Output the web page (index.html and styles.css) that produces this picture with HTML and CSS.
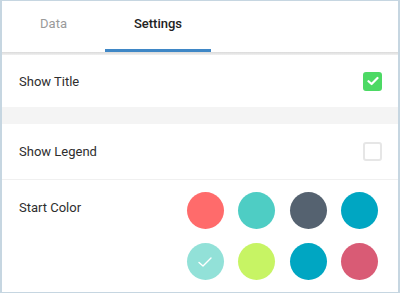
FILE: index.html
```html
<!DOCTYPE html>
<html>
<head>
<meta charset="utf-8">
<link rel="stylesheet" href="styles.css">
</head>
<body>
<div class="panel">
  <div class="tabs">
    <div class="tab">Data</div>
    <div class="tab active">Settings</div>
  </div>
  <div class="tab-shadow"></div>
  <div class="row row-title">
    <span class="label">Show Title</span>
    <span class="check on">
      <svg width="12" height="10" viewBox="0 0 12 10"><path d="M1.5 5.2 L4.6 8 L10.5 2" fill="none" stroke="#fff" stroke-width="2.2" stroke-linecap="round" stroke-linejoin="round"/></svg>
    </span>
  </div>
  <div class="band"></div>
  <div class="row row-legend">
    <span class="label">Show Legend</span>
    <span class="check"></span>
  </div>
  <div class="row-color">
    <span class="label color-label">Start Color</span>
    <div class="swatches">
      <span class="sw c1"></span>
      <span class="sw c2"></span>
      <span class="sw c3"></span>
      <span class="sw c4"></span>
      <span class="sw c5">
        <svg width="16" height="12" viewBox="0 0 16 12"><path d="M2 6.5 L6 10 L14 2" fill="none" stroke="#fff" stroke-width="1.4" stroke-linecap="round" stroke-linejoin="round"/></svg>
      </span>
      <span class="sw c6"></span>
      <span class="sw c7"></span>
      <span class="sw c8"></span>
    </div>
  </div>
</div>
</body>
</html>
```
FILE: styles.css
```css
* { box-sizing: border-box; }
html, body { margin: 0; padding: 0; background: #fff; }
body { font-family: Roboto, "Noto Sans", sans-serif; }
.panel {
  width: 400px;
  height: 293px;
  border: 1px solid #c6d6e1;
  border-width: 1px 2px 1px 2px;
  display: flex;
  flex-direction: column;
  overflow: hidden;
}
.tabs {
  display: flex;
  height: 51px;
}
.tab {
  width: 106px;
  display: flex;
  align-items: center;
  justify-content: center;
  font-size: 13px;
  color: #9a9a9a;
  padding-bottom: 3px;
  border-bottom: 3px solid transparent;
}
.tab:first-child { width: 103px; }
.tab.active {
  color: #222;
  font-weight: 500;
  border-bottom-color: #3f87c6;
}
.tab-shadow {
  height: 3px;
  background: linear-gradient(#dadada, #f0f0f0);
}
.row {
  display: flex;
  align-items: center;
  justify-content: space-between;
  padding: 0 16px 0 17px;
}
.row-title { height: 52px; }
.row-legend { border-bottom: 1px solid #f0f0f0; height: 56px; }
.band { height: 17px; background: #f4f4f4; }
.label { font-size: 13px; color: #2e2e2e; }
.check {
  width: 19px;
  height: 19px;
  border-radius: 3px;
  border: 2px solid #e6e6e6;
  display: flex;
  align-items: center;
  justify-content: center;
}
.check.on { background: #4cd964; border-color: #4cd964; }
.row-color {
  flex: 1;
  display: flex;
  justify-content: space-between;
  padding: 0 20px 0 17px;
}
.color-label { padding-top: 20px; }
.swatches {
  padding-top: 12px;
  display: grid;
  grid-template-columns: repeat(4, 37px);
  column-gap: 14.5px;
  row-gap: 14px;
  align-content: start;
}
.sw {
  width: 37px;
  height: 37px;
  border-radius: 50%;
  display: flex;
  align-items: center;
  justify-content: center;
}
.c1 { background: #ff6b6b; }
.c2 { background: #4ecdc4; }
.c3 { background: #556270; }
.c4 { background: #00a6c2; }
.c5 { background: #92e1d8; }
.c6 { background: #c7f464; }
.c7 { background: #00a6c2; }
.c8 { background: #d95b75; }
```
